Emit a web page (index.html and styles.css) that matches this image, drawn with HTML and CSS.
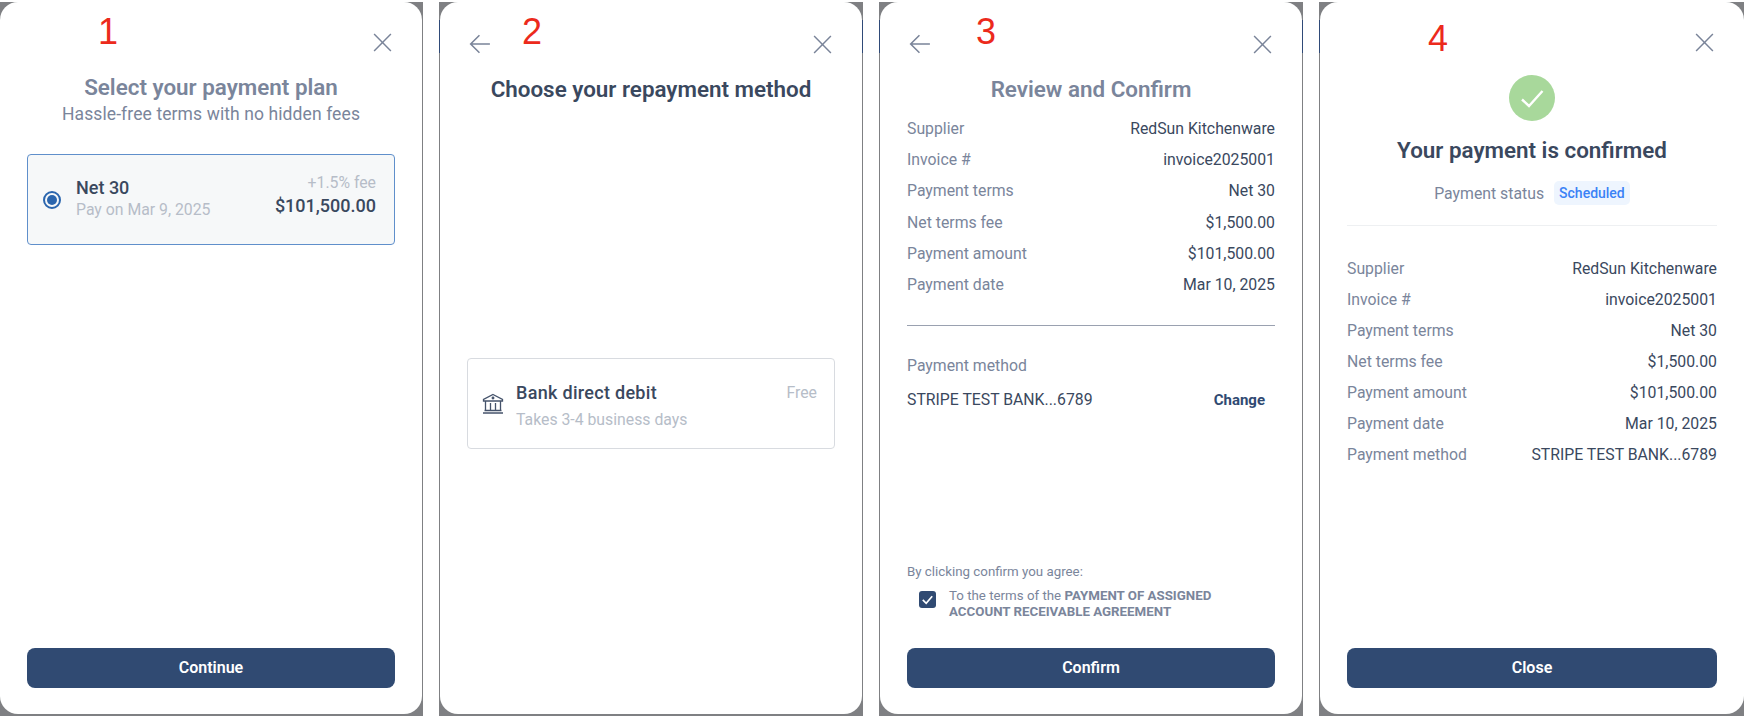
FILE: index.html
```html
<!DOCTYPE html>
<html lang="en">
<head>
<meta charset="utf-8">
<title>Payment flow</title>
<link rel="stylesheet" href="styles.css">
</head>
<body>
<main class="strip">

  <section class="shot">
    <span class="step step-a">1</span>
    <div class="modal">
      <header class="head">
        <span></span>
        <svg class="icon" viewBox="0 0 20 20"><path d="M2 2 L18 18 M18 2 L2 18"/></svg>
      </header>
      <h2 class="title muted tight">Select your payment plan</h2>
      <p class="sub">Hassle-free terms with no hidden fees</p>
      <div class="plan">
        <span class="radio"><span class="dot"></span></span>
        <div class="plan-main plan-left">
          <div class="plan-name">Net 30</div>
          <div class="hint">Pay on Mar 9, 2025</div>
        </div>
        <div class="plan-side">
          <div class="hint">+1.5% fee</div>
          <div class="plan-amount">$101,500.00</div>
        </div>
      </div>
      <button class="cta">Continue</button>
    </div>
  </section>

  <section class="shot navy">
    <span class="step step-b">2</span>
    <div class="modal">
      <header class="head head-low">
        <svg class="icon back" viewBox="0 0 20 20"><path d="M19 10 H1.5 M9.5 2 L1.5 10 L9.5 18"/></svg>
        <svg class="icon" viewBox="0 0 20 20"><path d="M2 2 L18 18 M18 2 L2 18"/></svg>
      </header>
      <h2 class="title dark low">Choose your repayment method</h2>
      <div class="method">
        <svg class="bank" viewBox="0 0 22 22"><path d="M11 1.5 L20.5 6.5 V8 H1.5 V6.5 Z M3.5 8 V17 M18.5 8 V17 M8.5 10 V17 M13.5 10 V17 M2.5 17.5 H19.5 M1 20 H21"/><circle cx="11" cy="5" r=".8"/></svg>
        <div class="plan-main method-text">
          <div class="method-name">Bank direct debit</div>
          <div class="hint spaced">Takes 3-4 business days</div>
        </div>
        <div class="hint free">Free</div>
      </div>
      <button class="cta hidden" aria-hidden="true">&nbsp;</button>
    </div>
  </section>

  <section class="shot navy">
    <span class="step step-c">3</span>
    <div class="modal">
      <header class="head head-low">
        <svg class="icon back" viewBox="0 0 20 20"><path d="M19 10 H1.5 M9.5 2 L1.5 10 L9.5 18"/></svg>
        <svg class="icon" viewBox="0 0 20 20"><path d="M2 2 L18 18 M18 2 L2 18"/></svg>
      </header>
      <h2 class="title muted low">Review and Confirm</h2>
      <dl class="rows rows-review">
        <div class="row"><dt>Supplier</dt><dd>RedSun Kitchenware</dd></div>
        <div class="row"><dt>Invoice #</dt><dd>invoice2025001</dd></div>
        <div class="row"><dt>Payment terms</dt><dd>Net 30</dd></div>
        <div class="row"><dt>Net terms fee</dt><dd>$1,500.00</dd></div>
        <div class="row"><dt>Payment amount</dt><dd>$101,500.00</dd></div>
        <div class="row"><dt>Payment date</dt><dd>Mar 10, 2025</dd></div>
      </dl>
      <hr class="rule">
      <div class="pm-label">Payment method</div>
      <div class="pm-row"><span>STRIPE TEST BANK...6789</span><span class="change">Change</span></div>
      <div class="agree">
        <div class="agree-lead">By clicking confirm you agree:</div>
        <div class="agree-row">
          <span class="check"><svg viewBox="0 0 18 18"><path d="M4 9.5 L7.6 13 L14 5.5"/></svg></span>
          <p>To the terms of the <b>PAYMENT OF ASSIGNED</b> <b>ACCOUNT RECEIVABLE AGREEMENT</b></p>
        </div>
      </div>
      <button class="cta pushed">Confirm</button>
    </div>
  </section>

  <section class="shot navy wide">
    <span class="step step-d">4</span>
    <div class="modal">
      <header class="head">
        <span></span>
        <svg class="icon" viewBox="0 0 20 20"><path d="M2 2 L18 18 M18 2 L2 18"/></svg>
      </header>
      <div class="ok"><svg viewBox="0 0 46 46"><path d="M13 24.5 L20 31 L33.5 16"/></svg></div>
      <h2 class="title dark done">Your payment is confirmed</h2>
      <div class="status"><span>Payment status</span><span class="badge">Scheduled</span></div>
      <hr class="rule light">
      <dl class="rows rows-done">
        <div class="row"><dt>Supplier</dt><dd>RedSun Kitchenware</dd></div>
        <div class="row"><dt>Invoice #</dt><dd>invoice2025001</dd></div>
        <div class="row"><dt>Payment terms</dt><dd>Net 30</dd></div>
        <div class="row"><dt>Net terms fee</dt><dd>$1,500.00</dd></div>
        <div class="row"><dt>Payment amount</dt><dd>$101,500.00</dd></div>
        <div class="row"><dt>Payment date</dt><dd>Mar 10, 2025</dd></div>
        <div class="row"><dt>Payment method</dt><dd>STRIPE TEST BANK...6789</dd></div>
      </dl>
      <button class="cta pushed">Close</button>
    </div>
  </section>

</main>
</body>
</html>
```
FILE: styles.css
```css
* { box-sizing: border-box; }
html, body { margin: 0; height: 100%; overflow: hidden; background: #fff; }
body { font-family: Roboto, "Liberation Sans", sans-serif; color: #3a485e; -webkit-font-smoothing: antialiased; }

.strip { display: flex; gap: 16px; width: 1800px; height: 716px; margin-left: -1px; padding-top: 2px; }
.shot { position: relative; flex: 0 0 424px; background: #7f8083; padding: 0 1px 2px; }
.shot.navy { background: linear-gradient(#7f8083 18px, #2f4a78 18px, #2f4a78 51px, #7f8083 51px); }
.shot.wide { flex-basis: 426px; }
.modal { height: 100%; background: #fff; border-radius: 18px; padding: 0 27px 26px; display: flex; flex-direction: column; }

.step { position: absolute; top: 9px; z-index: 2; font: 36px/42px "Liberation Sans", sans-serif; color: #ec2a1c; }
.step-a { left: 99px; }
.step-b { left: 83px; }
.step-c { left: 97px; }
.step-d { left: 109px; top: 16px; }

.head { height: 54px; padding: 0 2px 0 5px; display: flex; justify-content: space-between; align-items: center; flex: none; }
.icon { width: 21px; height: 21px; margin-top: 26px; fill: none; stroke: #7a8499; stroke-width: 1.4; }
.head-low { height: 54px; padding-left: 0; }
.head-low .icon { margin-top: 30px; }
.head-low .back { margin-top: 30px; margin-left: 2px; width: 22px; height: 22px; }

.title { margin: 0; font-size: 22.4px; line-height: 28px; font-weight: 600; text-align: center; flex: none; }
.muted { color: #7a859b; }
.dark { color: #3a485e; }
.tight { margin-top: 17px; }
.low { margin-top: 19px; }
.done { margin-top: 15px; }
.sub { margin: 3px 0 0; font-size: 17.5px; line-height: 20px; letter-spacing: .1px; text-align: center; color: #7a859b; flex: none; }

.plan { margin-top: 30px; height: 91px; flex: none; display: flex; align-items: center; padding: 0 18px 0 15px; background: #f6f8f9; border: 1px solid #5f8fcb; border-radius: 4px; }
.radio { width: 18px; height: 18px; border: 2px solid #2b66ae; border-radius: 50%; display: flex; align-items: center; justify-content: center; flex: none; margin-right: 15px; }
.dot { width: 10px; height: 10px; border-radius: 50%; background: #2b66ae; }
.plan-main { flex: 1; }
.plan-left { padding-bottom: 2px; }
.plan-name { font-size: 18px; line-height: 22.5px; font-weight: 500; }
.hint { font-size: 15.8px; line-height: 20px; color: #b6bdc8; }
.plan-side { text-align: right; padding-bottom: 9px; }
.plan-amount { font-size: 18px; line-height: 24px; font-weight: 500; margin-top: 1px; }

.method { margin-top: 255px; height: 91px; flex: none; display: flex; align-items: center; padding: 0 17px 0 14px; border: 1px solid #d8dbe0; border-radius: 4px; }
.bank { width: 22px; height: 22px; flex: none; margin-right: 12px; fill: none; stroke: #45536b; stroke-width: 1.3; }
.method-text { padding-top: 4px; }
.method-name { font-size: 18px; line-height: 22px; font-weight: 500; letter-spacing: .3px; }
.spaced { margin-top: 6px; }
.free { align-self: flex-start; margin-top: 24px; }
.hidden { visibility: hidden; }

.rows { margin: 0; flex: none; display: flex; flex-direction: column; gap: 11px; }
.rows-review { margin-top: 16px; gap: 11.2px; }
.rows-done { margin-top: 33px; }
.row { display: flex; justify-content: space-between; font-size: 15.8px; line-height: 20px; }
dt { color: #7a859b; }
dd { margin: 0; color: #3a485e; }

.rule { width: 100%; margin: 30px 0 0; border: 0; border-top: 1px solid #9aa1b0; flex: none; }
.rule.light { margin-top: 20px; border-top-color: #eef0f2; }
.pm-label { margin-top: 30px; font-size: 15.8px; line-height: 20px; color: #7a859b; }
.pm-row { margin-top: 14px; padding-right: 10px; display: flex; justify-content: space-between; font-size: 15.8px; line-height: 20px; }
.change { font-size: 15px; font-weight: 700; color: #304a72; }

.agree { margin-top: auto; color: #7a859b; font-size: 13.3px; line-height: 16px; }
.agree-row { display: flex; margin: 8px 0 0 12px; }
.agree-row p { margin: 0 0 0 13px; flex: 1; padding-right: 40px; line-height: 16px; }
.agree-row b { font-weight: 700; white-space: nowrap; }
.check { width: 17px; height: 17px; flex: none; margin-top: 3px; border-radius: 3px; background: #304a72; display: flex; }
.check svg { width: 100%; height: 100%; fill: none; stroke: #fff; stroke-width: 1.8; }

.cta { height: 40px; flex: none; margin-top: auto; width: 100%; border: 0; border-radius: 8px; background: #304a72; color: #fff; font: 600 16px/40px Roboto, sans-serif; padding: 0; }
.agree + .pushed { margin-top: 28px; }

.ok { width: 46px; height: 46px; flex: none; margin: 19px auto 0; border-radius: 50%; background: #a8d89b; }
.ok svg { display: block; width: 100%; height: 100%; fill: none; stroke: #fff; stroke-width: 2.4; }
.status { margin-top: 17px; display: flex; justify-content: center; align-items: center; gap: 10px; font-size: 15.8px; color: #7a859b; flex: none; height: 24px; }
.badge { padding: 0 5px; height: 24px; border-radius: 5px; background: #eef5fe; color: #3b82f6; font-size: 14px; font-weight: 500; line-height: 24px; }
```
